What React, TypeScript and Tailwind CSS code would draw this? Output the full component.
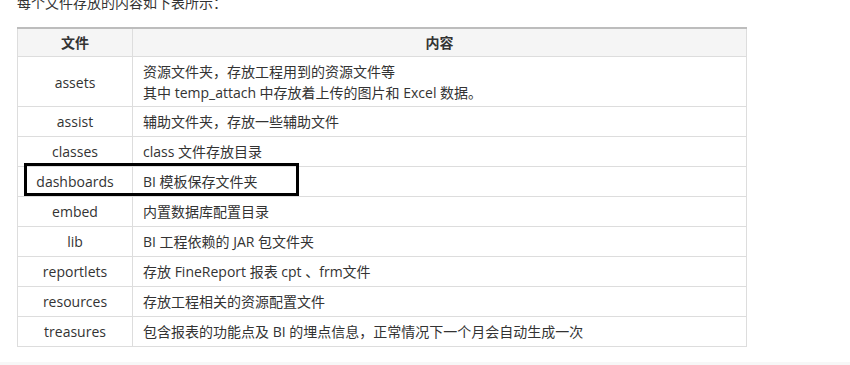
import React from 'react';

type Row = {
    name: string;
    lines: string[];
};

const rows: Row[] = [
    {
        name: 'assets',
        lines: ['资源文件夹，存放工程用到的资源文件等', '其中 temp_attach 中存放着上传的图片和 Excel 数据。'],
    },
    { name: 'assist', lines: ['辅助文件夹，存放一些辅助文件'] },
    { name: 'classes', lines: ['class 文件存放目录'] },
    { name: 'dashboards', lines: ['BI 模板保存文件夹'] },
    { name: 'embed', lines: ['内置数据库配置目录'] },
    { name: 'lib', lines: ['BI 工程依赖的 JAR 包文件夹'] },
    { name: 'reportlets', lines: ['存放 FineReport 报表 cpt 、frm文件'] },
    { name: 'resources', lines: ['存放工程相关的资源配置文件'] },
    { name: 'treasures', lines: ['包含报表的功能点及 BI 的埋点信息，正常情况下一个月会自动生成一次'] },
];

const App = () => {
    return (
        <div
            className="relative h-[365px] w-[850px] overflow-hidden bg-white text-[14px] leading-[21px] text-[#333]"
            style={{ fontFamily: '"Open Sans", "Noto Sans CJK SC", sans-serif' }}
        >
            <p className="mt-[-8px] pl-[17px]">每个文件存放的内容如下表所示：</p>

            <div className="relative ml-[17px] mt-[14px] w-[730px]">
                <table className="w-full border-collapse">
                    <thead>
                        <tr className="border-t-2 border-t-[#bdbdbd] bg-[#f5f5f5]">
                            <th className="w-[115px] border border-t-0 border-[#ddd] py-[3px] text-center font-bold">
                                文件
                            </th>
                            <th className="border border-t-0 border-[#ddd] py-[3px] text-center font-bold">
                                内容
                            </th>
                        </tr>
                    </thead>
                    <tbody>
                        {rows.map((row) => (
                            <tr key={row.name}>
                                <td
                                    className={
                                        row.lines.length > 1
                                            ? 'border border-[#ddd] pt-[4px] pb-[3px] text-center'
                                            : 'border border-[#ddd] py-[4px] text-center'
                                    }
                                >
                                    {row.name}
                                </td>
                                <td
                                    className={
                                        row.lines.length > 1
                                            ? 'border border-[#ddd] pt-[4px] pb-[3px] pl-[10px]'
                                            : 'border border-[#ddd] py-[4px] pl-[10px]'
                                    }
                                >
                                    {row.lines.map((line) => (
                                        <div key={line}>{line}</div>
                                    ))}
                                </td>
                            </tr>
                        ))}
                    </tbody>
                </table>

                {/* highlight frame around the dashboards row */}
                <div className="pointer-events-none absolute left-[7px] top-[136px] h-[33px] w-[275px] border-[3px] border-black" />
            </div>

            <div className="absolute bottom-0 left-0 h-[3px] w-full bg-[#f7f7f7]" />
        </div>
    );
};

export default App;
